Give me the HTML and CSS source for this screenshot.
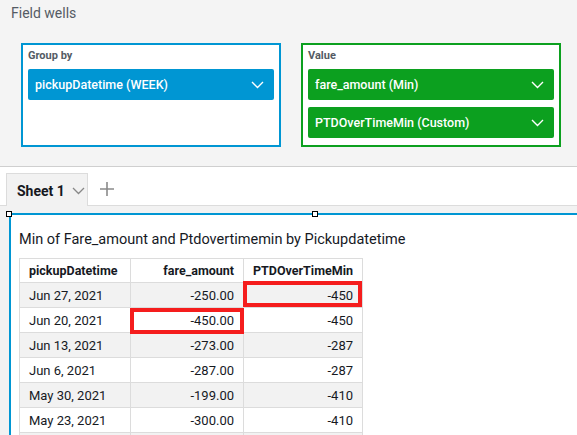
FILE: index.html
```html
<!DOCTYPE html>
<html lang="en">
  <head>
    <meta charset="UTF-8" />
    <meta name="viewport" content="width=device-width, initial-scale=1.0" />
    <title>Field wells</title>
    <link rel="stylesheet" href="styles.css">
  </head>
  <body>
    <div class="field-wells">
      <div class="fw-title">Field wells</div>
      <div class="wells">
        <div class="well well-group">
          <div class="well-label">Group by</div>
          <div class="pill">
            <span>pickupDatetime (WEEK)</span>
            <svg class="chev" width="13" height="8" viewBox="0 0 13 8"><path d="M1 1 L6.5 6.5 L12 1" /></svg>
          </div>
        </div>
        <div class="well well-value">
          <div class="well-label">Value</div>
          <div class="pill">
            <span>fare_amount (Min)</span>
            <svg class="chev" width="13" height="8" viewBox="0 0 13 8"><path d="M1 1 L6.5 6.5 L12 1" /></svg>
          </div>
          <div class="pill">
            <span>PTDOverTimeMin (Custom)</span>
            <svg class="chev" width="13" height="8" viewBox="0 0 13 8"><path d="M1 1 L6.5 6.5 L12 1" /></svg>
          </div>
        </div>
      </div>
    </div>

    <div class="tabbar">
      <div class="tab">
        <span class="tab-name">Sheet 1</span>
        <svg class="tab-chev" width="13" height="8" viewBox="0 0 13 8"><path d="M1 1 L6.5 6.5 L12 1" /></svg>
      </div>
      <div class="add-tab">
        <svg width="14" height="14" viewBox="0 0 14 14"><path d="M7 0 V14 M0 7 H14" /></svg>
      </div>
    </div>

    <div class="sheet">
      <div class="visual">
        <span class="handle handle-left"></span>
        <span class="handle handle-mid"></span>
        <div class="visual-title">Min of Fare_amount and Ptdovertimemin by Pickupdatetime</div>
        <table class="grid">
          <colgroup>
            <col class="c1">
            <col class="c2">
            <col class="c3">
          </colgroup>
          <thead>
            <tr>
              <th>pickupDatetime</th>
              <th class="num">fare_amount</th>
              <th class="num">PTDOverTimeMin</th>
            </tr>
          </thead>
          <tbody>
            <tr><td>Jun 27, 2021</td><td class="num">-250.00</td><td class="num mark mark-a">-450</td></tr>
            <tr><td>Jun 20, 2021</td><td class="num mark mark-b">-450.00</td><td class="num">-450</td></tr>
            <tr><td>Jun 13, 2021</td><td class="num">-273.00</td><td class="num">-287</td></tr>
            <tr><td>Jun 6, 2021</td><td class="num">-287.00</td><td class="num">-287</td></tr>
            <tr><td>May 30, 2021</td><td class="num">-199.00</td><td class="num">-410</td></tr>
            <tr><td>May 23, 2021</td><td class="num">-300.00</td><td class="num">-410</td></tr>
            <tr><td></td><td></td><td></td></tr>
          </tbody>
        </table>
      </div>
    </div>
  </body>
</html>
```

FILE: styles.css
```css
body {
  margin: 0;
  width: 577px;
  height: 435px;
  overflow: hidden;
  font-family: Roboto, "Liberation Sans", sans-serif;
  color: #16191f;
  background: #fff;
}

.field-wells {
  background: #f4f4f4;
  border-bottom: 1px solid #cfcfcf;
  padding-bottom: 19px;
  height: 147px;
}

.fw-title {
  padding: 3px 11px 0;
  line-height: 20px;
  font-size: 14px;
  color: #545b64;
}

.wells {
  display: flex;
  gap: 20px;
  padding-left: 21px;
  margin-top: 20px;
}

.well {
  width: 260px;
  height: 104px;
  box-sizing: border-box;
  border: 2px solid #0096d3;
  background: #fff;
  padding: 4px 5px 0;
}

.well-value {
  border-color: #0ca01f;
}

.well-label {
  font-size: 11px;
  font-weight: 700;
  line-height: 14px;
  color: #545b64;
  margin-bottom: 6px;
}

.pill {
  display: flex;
  align-items: center;
  justify-content: space-between;
  height: 31px;
  padding: 0 10px 0 7px;
  border-radius: 2px;
  background: #0096d3;
  color: #fff;
  font-size: 12.5px;
  font-weight: 500;
}

.well-value .pill {
  background: #0ca01f;
}

.pill + .pill {
  margin-top: 7px;
}

.chev path {
  fill: none;
  stroke: #fff;
  stroke-width: 1.4;
}

.tabbar {
  display: flex;
  align-items: flex-end;
  height: 38px;
  border-bottom: 1px solid #dcdcdc;
  padding-left: 6px;
}

.tab {
  display: flex;
  align-items: center;
  gap: 7px;
  box-sizing: border-box;
  width: 82px;
  height: 33px;
  margin-bottom: -1px;
  padding: 2px 0 0 10px;
  border: 1px solid #dcdcdc;
  border-bottom: none;
  background: #f2f2f2;
  font-size: 14px;
  font-weight: 700;
  white-space: nowrap;
}

.tab-name,
.tab-chev {
  flex-shrink: 0;
}

.tab-chev path {
  fill: none;
  stroke: #888;
  stroke-width: 1.3;
}

.add-tab {
  display: flex;
  align-items: center;
  height: 32px;
  padding-left: 12px;
}

.add-tab path {
  stroke: #8a8a8a;
  stroke-width: 1.6;
}

.sheet {
  background: #f2f2f2;
  padding: 7px 0 0 9px;
  height: 300px;
}

.visual {
  position: relative;
  width: 612px;
  height: 300px;
  box-sizing: border-box;
  border-top: 2px solid #0096d3;
  border-left: 2px solid #0096d3;
  background: #fff;
  padding: 15px 0 0 8px;
}

.handle {
  position: absolute;
  top: -4px;
  width: 4px;
  height: 4px;
  border: 1px solid #000;
  background: #fff;
}

.handle-left {
  left: -5px;
}

.handle-mid {
  left: 301px;
}

.visual-title {
  font-size: 14.5px;
  line-height: 20px;
  color: #16191f;
  margin-bottom: 8px;
  white-space: nowrap;
}

.grid {
  width: 343px;
  table-layout: fixed;
  border-collapse: collapse;
  font-size: 13px;
  color: #16191f;
}

.grid .c1 {
  width: 111px;
}

.grid .c2 {
  width: 113px;
}

.grid .c3 {
  width: 119px;
}

.grid th,
.grid td {
  border: 1px solid #dcdcdc;
  padding: 0 9px;
  text-align: left;
  white-space: nowrap;
}

.grid th {
  height: 23px;
  font-size: 12.5px;
  font-weight: 700;
  background: #fff;
}

.grid td {
  height: 24px;
}

.grid .num {
  text-align: right;
}

.grid tbody tr:nth-child(odd) td {
  background: #f2f2f2;
}

.mark {
  position: relative;
}

.mark::after {
  content: "";
  position: absolute;
  border: 4px solid #f51d1d;
}

.mark-a::after {
  top: -2px;
  left: -1px;
  right: 0;
  bottom: 0;
}

.mark-b::after {
  top: 0;
  left: -1px;
  right: -1px;
  bottom: -2px;
}
```
